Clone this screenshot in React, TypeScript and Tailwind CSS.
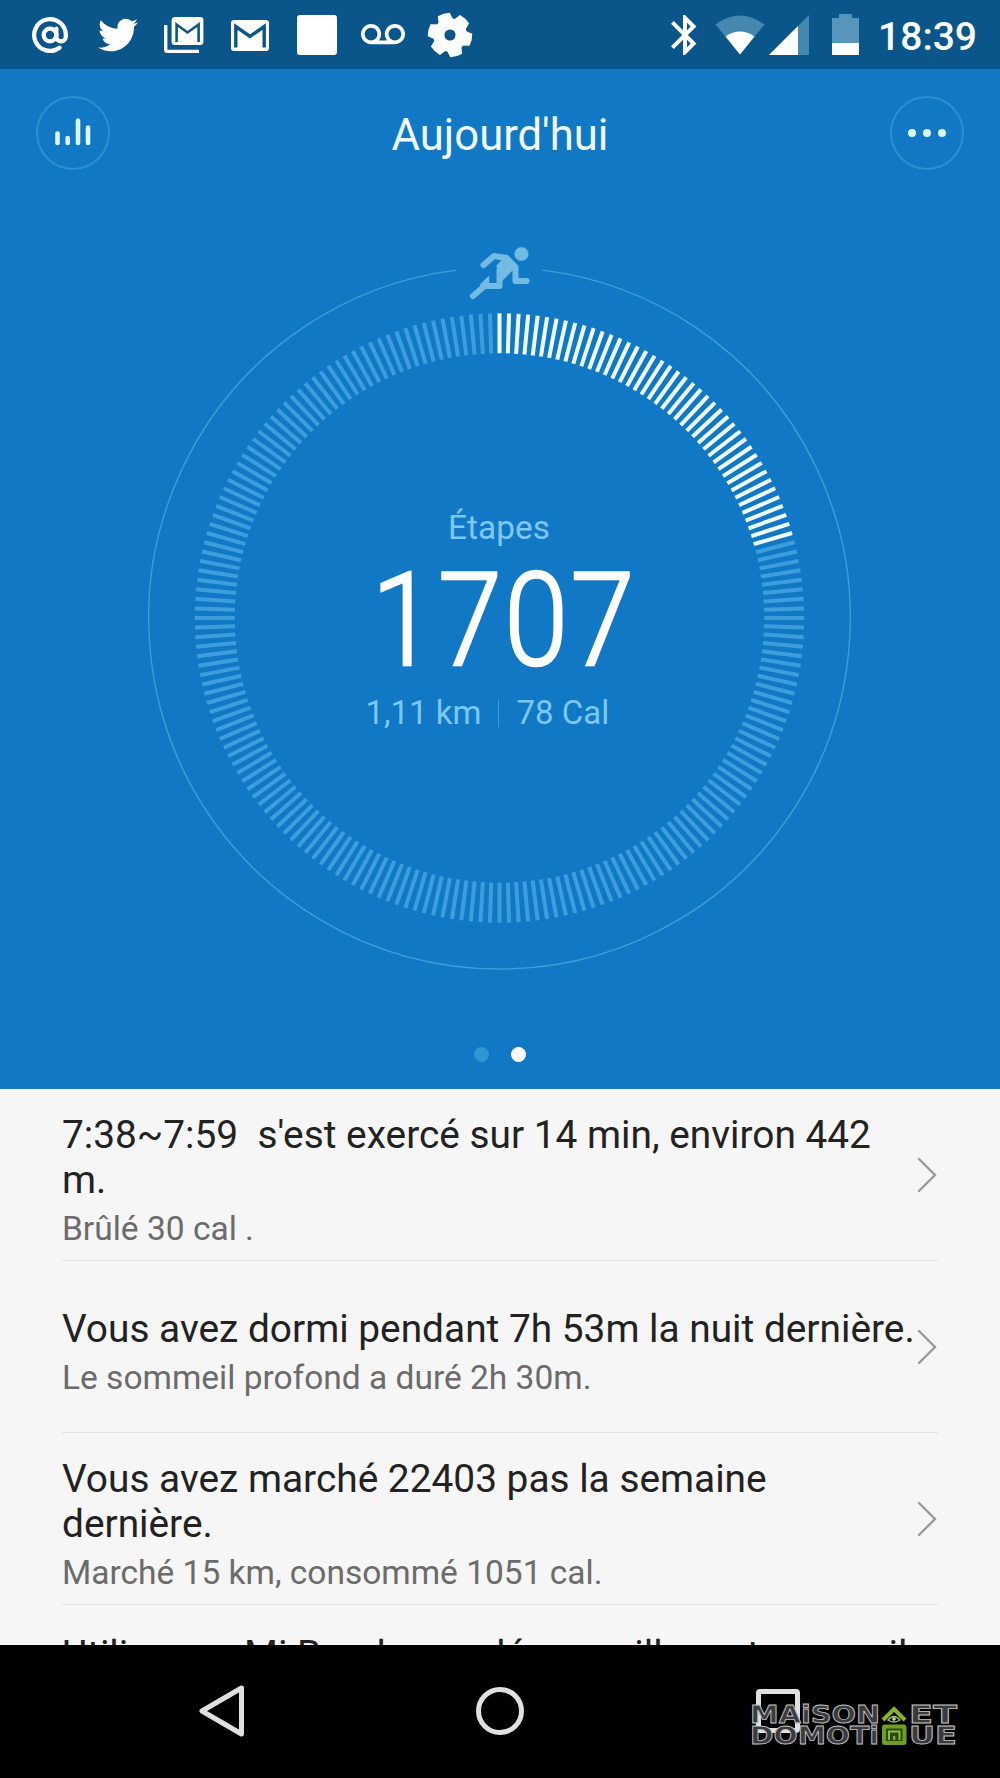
import type { ReactNode } from "react";
import { AtSign } from "lucide-react";
import { FaTwitter } from "react-icons/fa";
import { MdBluetooth, MdVoicemail } from "react-icons/md";

const TICK_COUNT = 200;
const ACTIVE_TICKS = 42;

const ACTIVITIES = [
  {
    title: "7:38~7:59  s'est exercé sur 14 min, environ 442 m.",
    desc: "Brûlé 30 cal .",
  },
  {
    title: "Vous avez dormi pendant 7h 53m la nuit dernière.",
    desc: "Le sommeil profond a duré 2h 30m.",
  },
  {
    title: "Vous avez marché 22403 pas la semaine dernière.",
    desc: "Marché 15 km, consommé 1051 cal.",
  },
];

function GearIcon() {
  return (
    <svg viewBox="-23 -23 46 46" className="w-[46px] h-[46px]" aria-hidden="true">
      <g transform="rotate(-17)" fill="#fff">
        <circle r="11.2" fill="none" stroke="#fff" strokeWidth="11.2" />
        {[0, 60, 120, 180, 240, 300].map((a) => (
          <path key={a} d="M-8 -12 L-6.2 -21.4 Q0 -23 6.2 -21.4 L8 -12 Z" transform={`rotate(${a})`} />
        ))}
      </g>
    </svg>
  );
}

function StatusBar() {
  return (
    <div className="h-[69px] shrink-0 bg-[#0a568a] text-white flex items-center justify-between pl-[31px] pr-[23px]">
      <div className="flex items-center">
        <AtSign className="w-[38px] h-[38px]" strokeWidth={2.7} />
        <FaTwitter className="w-[40px] h-[40px] ml-[29px]" />
        {/* Stacked mail */}
        <svg viewBox="0 0 40 36" className="w-10 h-9 ml-[26px]" aria-hidden="true">
          <path d="M1.7 8v24.5a2 2 0 0 0 2 2H35" fill="none" stroke="#fff" strokeWidth="3.4" />
          <rect x="8.8" y="1.3" width="29.4" height="25.4" rx="2" fill="#fff" stroke="#fff" strokeWidth="2.4" />
          <path d="M12.6 25V7.5L23.5 15.5L34.6 7.5V25" fill="none" stroke="#0a568a" strokeWidth="2.6" />
          <path d="M12 5.3h23L23.5 13Z" fill="#fff" />
        </svg>
        <svg viewBox="0 0 40 34" className="w-10 h-[34px] ml-[26px]" aria-hidden="true">
          <rect x="1" y="2" width="38" height="31" rx="3" fill="#fff" />
          <path d="M5.8 29.5V8.5L20 18.5L34.2 8.5V29.5" fill="none" stroke="#0a568a" strokeWidth="3.4" />
        </svg>
        <div className="w-10 h-10 rounded-[3px] bg-white ml-[27px]" />
        <MdVoicemail className="w-[44px] h-[44px] ml-6" />
        <div className="ml-[22px]">
          <GearIcon />
        </div>
      </div>
      <div className="flex items-center">
        <MdBluetooth className="w-12 h-12 -mr-0.5" />
        <svg viewBox="0 0 50 40" className="w-[50px] h-10 ml-[8px]" aria-hidden="true">
          <path d="M0.5 9.5Q25 -8.5 49.5 9.5L25 39.5Z" fill="#4488b0" />
          <path d="M10.5 21.5Q25 11.5 39.5 21.5L25 39.5Z" fill="#fff" />
        </svg>
        <svg viewBox="0 0 40 40" className="w-10 h-10 ml-1" aria-hidden="true">
          <path d="M40 0V40H0Z" fill="#4488b0" />
          <path d="M29 11V40H0Z" fill="#fff" />
        </svg>
        <svg viewBox="0 0 27 41" className="w-[27px] h-[41px] ml-[23px]" aria-hidden="true">
          <path d="M7 0H20V4H27V29H0V4H7Z" fill="#5796ba" />
          <path d="M0 29H27V41H0Z" fill="#fff" />
        </svg>
        <span className="ml-[19px] mt-1.5 text-[39px] leading-none font-medium">18:39</span>
      </div>
    </div>
  );
}

function RoundButton({ label, children }: { label: string; children: ReactNode }) {
  return (
    <button
      aria-label={label}
      className="w-[74px] h-[74px] rounded-full border-2 border-[#2b8fd2] flex items-center justify-center"
    >
      {children}
    </button>
  );
}

function Header() {
  return (
    <div className="flex items-center justify-between px-9 pt-[27px]">
      <RoundButton label="Statistiques">
        <svg viewBox="0 0 36 30" className="w-9 h-[30px] -mt-0.5" aria-hidden="true">
          <path d="M2.5 16.5V26M12.7 21V26M23 3.5V26M33 10.5V26" stroke="#dcf6ff" strokeWidth="4.6" strokeLinecap="round" />
        </svg>
      </RoundButton>
      <h1 className="text-[43.6px] leading-none text-[#f0fcff] mt-1.5">Aujourd'hui</h1>
      <RoundButton label="Menu">
        <span className="flex gap-[7px] -mt-px">
          <span className="w-2 h-2 rounded-full bg-[#dcf6ff]" />
          <span className="w-2 h-2 rounded-full bg-[#dcf6ff]" />
          <span className="w-2 h-2 rounded-full bg-[#dcf6ff]" />
        </span>
      </RoundButton>
    </div>
  );
}

function StepRing() {
  return (
    <svg viewBox="-359.5 -380 720 740" className="w-[720px] h-[740px] col-start-1 row-start-1" aria-hidden="true">
      {/* Thin orbit, open at the top for the runner */}
      <path d="M43 -347.9A350.8 350.8 0 1 1 -43 -347.9" fill="none" stroke="#3e9fd8" strokeWidth="1.4" />
      {Array.from({ length: TICK_COUNT }, (_, i) => (
        <line
          key={i}
          y1="-304.7"
          y2="-264.7"
          transform={`rotate(${(i * 360) / TICK_COUNT})`}
          stroke={i < ACTIVE_TICKS ? "#f0ffff" : "#3c9edc"}
          strokeWidth="4"
        />
      ))}
      <g fill="#72bce4" stroke="#72bce4" strokeLinejoin="round" strokeLinecap="round">
        <circle cx="22" cy="-364" r="6.8" strokeWidth="0.4" />
        <path d="M-16 -353L-5.5 -362L7 -360" fill="none" strokeWidth="6" />
        <path d="M7 -360L16 -351V-337H27" fill="none" strokeWidth="6" />
        <path d="M-26.5 -322L-15 -332H0V-348" fill="none" strokeWidth="6" />
        <path d="M7 -361L13 -349.5L1.5 -338L-1.5 -352Z" strokeWidth="3" />
        <path d="M-11 -341V-333H-19Z" strokeWidth="1.5" />
      </g>
    </svg>
  );
}

function Chevron() {
  return (
    <svg viewBox="0 0 20 36" className="w-5 h-9 shrink-0 -ml-px" aria-hidden="true">
      <path d="M2 2L18 18L2 34" fill="none" stroke="#999" strokeWidth="2.4" strokeLinecap="round" />
    </svg>
  );
}

function SiteLogo() {
  return (
    <svg viewBox="0 0 210 44" className="w-[210px] h-11 absolute left-[749px] top-[57px]">
      <g
        fontFamily="'DejaVu Sans', sans-serif"
        fontWeight="700"
        fontSize="24.5"
        fill="#3b3b3e"
        stroke="#c4c4c4"
        strokeWidth="0.8"
      >
        <text x="1" y="20.5" textLength="130" lengthAdjust="spacingAndGlyphs">MAiSON</text>
        <text x="160" y="20.5" textLength="48" lengthAdjust="spacingAndGlyphs">ET</text>
        <text x="1" y="42" textLength="129" lengthAdjust="spacingAndGlyphs">DOMOTi</text>
        <text x="160" y="42" textLength="48" lengthAdjust="spacingAndGlyphs">UE</text>
      </g>
      <path d="M134 18L145 7L156 18" fill="none" stroke="#86b52c" strokeWidth="4" />
      <path d="M139 18Q145 11 151 18Q145 22 139 18Z" fill="none" stroke="#9cc65a" strokeWidth="1.3" />
      <circle cx="145" cy="17" r="1.8" fill="#c5df96" />
      <rect x="135" y="24.5" width="20.5" height="16.5" rx="1" fill="#2b4a12" stroke="#6f9f22" strokeWidth="4" />
      <path d="M140 38V29.5H150.5V38M145.2 38V34" fill="none" stroke="#8cba3a" strokeWidth="2" />
    </svg>
  );
}

export default function App() {
  return (
    <div className="w-[1000px] h-[1778px] flex flex-col overflow-hidden bg-[#f6f6f6] font-['Roboto',sans-serif]">
      <StatusBar />

      <section className="h-[1020px] shrink-0 bg-[#1178c6] flex flex-col items-center">
        <div className="w-full">
          <Header />
        </div>
        <div className="grid justify-items-center mt-[68px]">
          <StepRing />
          <div className="col-start-1 row-start-1 flex flex-col items-center pt-[271px] pr-0.5">
            <p className="text-[33.4px] leading-[38px] text-[#7cc8f2]">Étapes</p>
            <p className="text-[130px] leading-[134px] mt-[7px] pl-[11px] font-light tracking-[2.8px] scale-x-[0.885] text-white [-webkit-text-stroke:2.5px_white]">
              1707
            </p>
            <div className="flex items-center mt-[6px] text-[33px] leading-[38px] text-[#7cc8f2]">
              <span className="w-[130px] text-right whitespace-nowrap">1,11 km</span>
              <span className="w-px h-7 bg-[#3f9ad8] mx-[17px]" />
              <span className="w-[130px] whitespace-nowrap">78 Cal</span>
            </div>
          </div>
        </div>
        <div className="flex gap-[22px] mt-[69px] pr-px">
          <span className="w-[15px] h-[15px] rounded-full bg-[#2f96d3]" />
          <span className="w-[15px] h-[15px] rounded-full bg-white" />
        </div>
      </section>

      <section className="h-[556px] shrink-0 overflow-hidden px-[62px]">
        {ACTIVITIES.map((a) => (
          <div key={a.title} className="h-[172px] border-b-[1.5px] border-[#e2e2e2] flex items-center">
            <div className="w-[856px] shrink-0 pt-[10px]">
              <p className="text-[38.85px] leading-[45px] text-[#222] whitespace-pre-wrap">{a.title}</p>
              <p className="text-[33.5px] leading-[38px] mt-2 text-[#6b6b6b]">{a.desc}</p>
            </div>
            <Chevron />
          </div>
        ))}
        <p className="pt-[27px] text-[38.85px] leading-[45.5px] text-[#222] whitespace-nowrap">
          Utiliser un Mi Band pour déverrouiller cet appareil
        </p>
      </section>

      <nav className="relative h-[133px] shrink-0 bg-black flex items-center pl-[197px] pb-px">
        <svg viewBox="0 0 50 54" className="w-[50px] h-[54px]" aria-hidden="true">
          <path d="M44.5 4L5 27L44.5 50Z" fill="none" stroke="#e0e0e0" strokeWidth="5" strokeLinejoin="round" />
        </svg>
        <div className="w-12 h-12 rounded-full border-[5px] border-[#e0e0e0] ml-[229px]" />
        <div className="w-11 h-11 rounded-[4px] border-[5px] border-[#e0e0e0] ml-[232px]" />
        <SiteLogo />
      </nav>
    </div>
  );
}
